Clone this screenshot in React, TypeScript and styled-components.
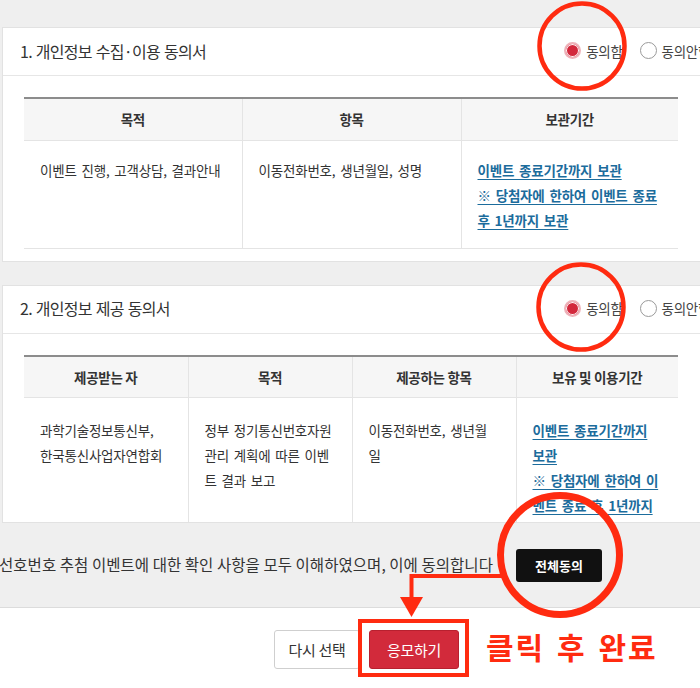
import React from "react";
import styled, { createGlobalStyle } from "styled-components";

const GlobalStyle = createGlobalStyle`
  html, body { margin: 0; padding: 0; background: #efefef; overflow: hidden; }
  body { font-family: "Noto Sans CJK KR", "Noto Sans", sans-serif; color: #333; }
  * { box-sizing: border-box; }
`;

const Page = styled.div`
  position: relative;
  width: 700px;
  height: 688px;
  overflow: hidden;
  background: #efefef;
`;

const TopBand = styled.div`
  height: 27px;
`;

const Panel = styled.section<{ $gap?: number }>`
  margin-left: 2px;
  margin-top: ${(p) => p.$gap ?? 0}px;
  width: 720px;
  background: #fff;
  border: 1px solid #e2e2e2;
  border-right: none;
`;

const PanelHeader = styled.div`
  height: 48px;
  display: flex;
  align-items: center;
  justify-content: space-between;
  padding: 0 12px 2px 17px;
  border-bottom: 1px solid #e6e6e6;
`;

const Title = styled.h3`
  margin: 0;
  font-size: 16px;
  font-weight: 400;
  color: #333;
  letter-spacing: -0.7px;
  word-spacing: 1px;
`;

const RadioGroup = styled.div`
  display: flex;
  align-items: center;
`;

const RadioItem = styled.label`
  display: flex;
  align-items: center;
  gap: 5px;
  margin-left: 17px;
  font-size: 13.5px;
  letter-spacing: -0.3px;
  color: #444;
  &:first-child { margin-left: 0; }
`;

const RadioDot = styled.span<{ $on?: boolean }>`
  width: 17px;
  height: 17px;
  border-radius: 50%;
  display: inline-block;
  border: ${(p) => (p.$on ? "2px solid #eeb3ba" : "1px solid #9a9a9a")};
  background: ${(p) => (p.$on ? "#d3283c" : "#fff")};
  box-shadow: ${(p) => (p.$on ? "inset 0 0 0 1px #fff" : "none")};
`;

const PanelBody = styled.div<{ $clip?: number }>`
  padding: 21px 0 12px 21px;
  ${(p) => (p.$clip ? `height: ${p.$clip}px; overflow: hidden; padding-bottom: 0;` : "")}
`;

const Table = styled.table`
  width: 654px;
  border-collapse: collapse;
  table-layout: fixed;
  border-top: 2px solid #8c8c8c;
`;

const Th = styled.th`
  height: 42px;
  padding: 0;
  background: #f6f6f6;
  font-size: 13.5px;
  font-weight: 700;
  color: #333;
  text-align: center;
  letter-spacing: -0.3px;
  border-left: 1px solid #e4e4e4;
  &:first-child { border-left: none; }
`;

const Td = styled.td<{ $h: number; $pr?: number; $pt?: number }>`
  height: ${(p) => p.$h}px;
  vertical-align: top;
  padding: ${(p) => p.$pt ?? 17}px ${(p) => p.$pr ?? 15}px 10px 16px;
  font-size: 13.5px;
  line-height: 25px;
  color: #333;
  letter-spacing: -0.2px;
  word-spacing: 2px;
  border-left: 1px solid #e4e4e4;
  border-top: 1px solid #e4e4e4;
  border-bottom: 1px solid #e4e4e4;
  &:first-child { border-left: none; }
`;

const LinkText = styled.a`
  display: block;
  color: #1c6c9c;
  font-weight: 700;
  text-decoration: underline;
  text-underline-offset: 3px;
`;

const ConfirmRow = styled.div`
  height: 85px;
  display: flex;
  align-items: center;
  gap: 23px;
  padding-bottom: 2px;
  border-bottom: 1px solid #dcdcdc;
  margin-left: -1px;
`;

const ConfirmText = styled.p`
  margin: 0;
  font-size: 15.5px;
  color: #333;
  letter-spacing: 0.05px;
  white-space: nowrap;
`;

const BlackButton = styled.button`
  flex: none;
  width: 86px;
  height: 33px;
  border: none;
  border-radius: 3px;
  background: #111;
  color: #fff;
  font-family: inherit;
  font-size: 13px;
  font-weight: 700;
  margin-top: 4px;
`;

const Footer = styled.div`
  height: 82px;
  background: #fff;
  display: flex;
  align-items: flex-start;
  gap: 9px;
  padding: 22px 0 0 274px;
`;

const Btn = styled.button<{ $primary?: boolean }>`
  height: 39px;
  width: ${(p) => (p.$primary ? 90 : 86)}px;
  border-radius: 3px;
  font-family: inherit;
  font-size: 15px;
  letter-spacing: -0.3px;
  border: ${(p) => (p.$primary ? "1px solid #b8202f" : "1px solid #cfcfcf")};
  background: ${(p) => (p.$primary ? "#d22a3b" : "#fff")};
  color: ${(p) => (p.$primary ? "#fff" : "#333")};
`;

const Overlay = styled.svg`
  position: absolute;
  left: 0;
  top: 0;
  pointer-events: none;
`;

const Callout = styled.div`
  position: absolute;
  left: 486px;
  top: 624px;
  font-size: 30px;
  font-weight: 700;
  color: #ff2b10;
  letter-spacing: 2px;
  word-spacing: 3px;
  white-space: nowrap;
`;

const Radios = () => (
  <RadioGroup>
    <RadioItem>
      <RadioDot $on />
      동의함
    </RadioItem>
    <RadioItem>
      <RadioDot />
      동의안함
    </RadioItem>
  </RadioGroup>
);

export default function App() {
  return (
    <Page>
      <GlobalStyle />
      <TopBand />
      <Panel>
        <PanelHeader>
          <Title>1. 개인정보 수집·이용 동의서</Title>
          <Radios />
        </PanelHeader>
        <PanelBody>
          <Table>
            <colgroup>
              <col style={{ width: 218 }} />
              <col style={{ width: 219 }} />
              <col style={{ width: 217 }} />
            </colgroup>
            <thead>
              <tr>
                <Th>목적</Th>
                <Th>항목</Th>
                <Th>보관기간</Th>
              </tr>
            </thead>
            <tbody>
              <tr>
                <Td $h={108}>이벤트 진행, 고객상담, 결과안내</Td>
                <Td $h={108}>이동전화번호, 생년월일, 성명</Td>
                <Td $h={108}>
                  <LinkText>이벤트 종료기간까지 보관</LinkText>
                  <LinkText>※ 당첨자에 한하여 이벤트 종료 후 1년까지 보관</LinkText>
                </Td>
              </tr>
            </tbody>
          </Table>
        </PanelBody>
      </Panel>
      <Panel $gap={23}>
        <PanelHeader>
          <Title>2. 개인정보 제공 동의서</Title>
          <Radios />
        </PanelHeader>
        <PanelBody $clip={188}>
          <Table>
            <colgroup>
              <col style={{ width: 164 }} />
              <col style={{ width: 164 }} />
              <col style={{ width: 164 }} />
              <col style={{ width: 162 }} />
            </colgroup>
            <thead>
              <tr>
                <Th>제공받는 자</Th>
                <Th>목적</Th>
                <Th>제공하는 항목</Th>
                <Th>보유 및 이용기간</Th>
              </tr>
            </thead>
            <tbody>
              <tr>
                <Td $h={150} $pt={20}>
                  과학기술정보통신부,
                  <br />
                  한국통신사업자연합회
                </Td>
                <Td $h={150} $pt={20} $pr={16}>
                  정부 정기통신번호자원 관리 계획에 따른 이벤트 결과 보고
                </Td>
                <Td $h={150} $pt={20} $pr={24}>
                  이동전화번호, 생년월일
                </Td>
                <Td $h={150} $pt={20} $pr={16}>
                  <LinkText>이벤트 종료기간까지 보관</LinkText>
                  <LinkText>※ 당첨자에 한하여 이벤트 종료 후 1년까지 보관</LinkText>
                </Td>
              </tr>
            </tbody>
          </Table>
        </PanelBody>
      </Panel>
      <ConfirmRow>
        <ConfirmText>선호번호 추첨 이벤트에 대한 확인 사항을 모두 이해하였으며, 이에 동의합니다</ConfirmText>
        <BlackButton>전체동의</BlackButton>
      </ConfirmRow>
      <Footer>
        <Btn>다시 선택</Btn>
        <Btn $primary>응모하기</Btn>
      </Footer>

      <Overlay width="700" height="688" viewBox="0 0 700 688">
        <g fill="none" stroke="#ff2b10">
          <circle cx="582" cy="46" r="42.5" strokeWidth="4.5" />
          <circle cx="581" cy="307" r="42.5" strokeWidth="4.5" />
          <circle cx="560" cy="555" r="59.5" strokeWidth="7" />
          <polyline points="502,576 411.5,576 411.5,599" strokeWidth="4" />
          <rect x="360" y="621" width="107" height="54" strokeWidth="4" />
        </g>
        <polygon points="400,597 423,597 411.5,617" fill="#ff2b10" />
      </Overlay>
      <Callout>클릭 후 완료</Callout>
    </Page>
  );
}
